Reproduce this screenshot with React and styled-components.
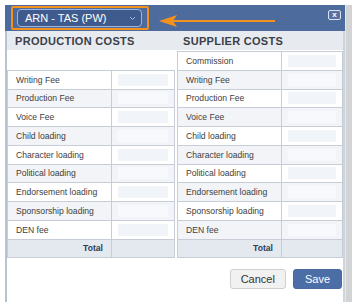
import React from 'react';
import styled, { createGlobalStyle } from 'styled-components';

const GlobalStyle = createGlobalStyle`
  html, body {
    margin: 0;
    padding: 0;
    background: #fff;
  }
  body {
    font-family: "Liberation Sans", Arial, Helvetica, sans-serif;
  }
`;

const productionRows = [
  'Writing Fee',
  'Production Fee',
  'Voice Fee',
  'Child loading',
  'Character loading',
  'Political loading',
  'Endorsement loading',
  'Sponsorship loading',
  'DEN fee',
];

const supplierRows = ['Commission', ...productionRows];

const Page = styled.div`
  display: flex;
  padding-top: 5px;
  padding-left: 5px;
  height: 297px;
  overflow: hidden;
`;

const Dialog = styled.div`
  width: 340px;
  display: flex;
  flex-direction: column;
`;

const Scrollbar = styled.div`
  width: 7px;
  background: #d2d3d5;
  border-left: 1px solid #e6e7e9;
`;

const Header = styled.div`
  height: 26px;
  background: #4d6b9c;
  display: flex;
  align-items: flex-start;
  padding: 0 4px 0 6px;
`;

const Highlight = styled.div`
  margin-top: 1px;
  width: 138px;
  height: 24px;
  box-sizing: border-box;
  border: 2px solid #f2921c;
  border-radius: 2px;
  padding: 1px 5px 0 4px;
`;

const Select = styled.div`
  height: 18px;
  box-sizing: border-box;
  border: 1px solid #9db6df;
  border-radius: 4px;
  background: #3f5b8d;
  color: #fff;
  font-size: 11px;
  display: flex;
  align-items: center;
  justify-content: space-between;
  padding: 0 5px 0 7px;
`;

const Chevron = styled.svg`
  width: 7px;
  height: 5px;
`;

const Arrow = styled.svg`
  margin-top: 10px;
  margin-left: 10px;
  width: 116px;
  height: 12px;
`;

const Close = styled.div`
  margin-left: auto;
  margin-top: 5px;
  width: 13px;
  height: 10px;
  box-sizing: border-box;
  border: 1px solid #dbe3f2;
  border-radius: 2px;
  background: #5873a3;
  color: #fff;
  font-size: 8px;
  font-weight: bold;
  line-height: 7px;
  text-align: center;
`;

const Body = styled.div`
  flex: 1;
  display: flex;
  flex-direction: column;
  border-left: 2px solid #b7c2d2;
  border-right: 2px solid #cfd5dd;
  background: #fff;
`;

const SectionBar = styled.div`
  height: 19px;
  background: #e7ebf0;
  display: grid;
  grid-template-columns: 170px 1fr;
  align-items: center;
`;

const SectionTitle = styled.div`
  padding-left: ${p => p.$indent}px;
  font-size: 11px;
  font-weight: bold;
  letter-spacing: 0.3px;
  color: #3b4048;
`;

const Columns = styled.div`
  display: grid;
  grid-template-columns: 168px 166px;
  gap: 2px;
  padding-top: 1px;
`;

const Column = styled.div`
  display: flex;
  flex-direction: column;
`;

const Spacer = styled.div`
  height: 18.75px;
`;

const Table = styled.div`
  border: 1px solid #c6cdd6;
  border-bottom: none;
`;

const Row = styled.div`
  display: grid;
  grid-template-columns: 104px 1fr;
  height: 18.75px;
  box-sizing: border-box;
  border-bottom: 1px solid #c6cdd6;
  background: ${p => (p.$total ? '#e4e9f0' : p.$stripe ? '#f2f4f7' : '#fff')};
`;

const Label = styled.div`
  display: flex;
  align-items: center;
  justify-content: ${p => (p.$right ? 'flex-end' : 'flex-start')};
  padding: 0 8px;
  border-right: 1px solid #c6cdd6;
  font-size: 8.6px;
  font-weight: ${p => (p.$right ? 'bold' : 'normal')};
  color: ${p => (p.$right ? '#2d3b55' : '#404040')};
  white-space: nowrap;
`;

const Value = styled.div`
  display: flex;
  align-items: center;
  padding: 0 6px;
`;

const Input = styled.div`
  flex: 1;
  height: 12px;
  background: ${p => (p.$onStripe ? '#f8f9fc' : '#f1f4f9')};
`;

const Footer = styled.div`
  display: flex;
  justify-content: flex-end;
  gap: 7px;
  padding: 11px 1px 0 0;
`;

const Button = styled.div`
  height: 20px;
  box-sizing: border-box;
  padding: 0 ${p => (p.$primary ? 11 : 10)}px;
  border-radius: 3px;
  border: 1px solid ${p => (p.$primary ? '#476a9f' : '#cfcfcf')};
  background: ${p => (p.$primary ? '#4b6ea7' : '#f1f1f1')};
  color: ${p => (p.$primary ? '#fff' : '#333')};
  font-size: 11px;
  display: flex;
  align-items: center;
`;

const CostTable = ({ rows, total }) => (
  <Table>
    {rows.map((name, i) => (
      <Row key={name} $stripe={i % 2 === 1}>
        <Label>{name}</Label>
        <Value>
          <Input $onStripe={i % 2 === 1} />
        </Value>
      </Row>
    ))}
    {total && (
      <Row $total>
        <Label $right>Total</Label>
        <Value />
      </Row>
    )}
  </Table>
);

const App = () => (
  <>
    <GlobalStyle />
    <Page>
      <Dialog>
        <Header>
          <Highlight>
            <Select>
              <span>ARN - TAS (PW)</span>
              <Chevron viewBox="0 0 7 5">
                <path d="M1 1 L3.5 3.5 L6 1" fill="none" stroke="#a9bcdc" strokeWidth="1" />
              </Chevron>
            </Select>
          </Highlight>
          <Arrow viewBox="0 0 116 12">
            <path d="M0 6 L18 0 L14 6 L18 12 Z" fill="#f2921c" />
            <rect x="14" y="5" width="102" height="2" fill="#f2921c" />
          </Arrow>
          <Close>x</Close>
        </Header>
        <Body>
          <SectionBar>
            <SectionTitle $indent={8}>PRODUCTION COSTS</SectionTitle>
            <SectionTitle $indent={6}>SUPPLIER COSTS</SectionTitle>
          </SectionBar>
          <Columns>
            <Column>
              <Spacer />
              <CostTable rows={productionRows} total />
            </Column>
            <Column>
              <CostTable rows={supplierRows} total />
            </Column>
          </Columns>
          <Footer>
            <Button>Cancel</Button>
            <Button $primary>Save</Button>
          </Footer>
        </Body>
      </Dialog>
      <Scrollbar />
    </Page>
  </>
);

export default App;
